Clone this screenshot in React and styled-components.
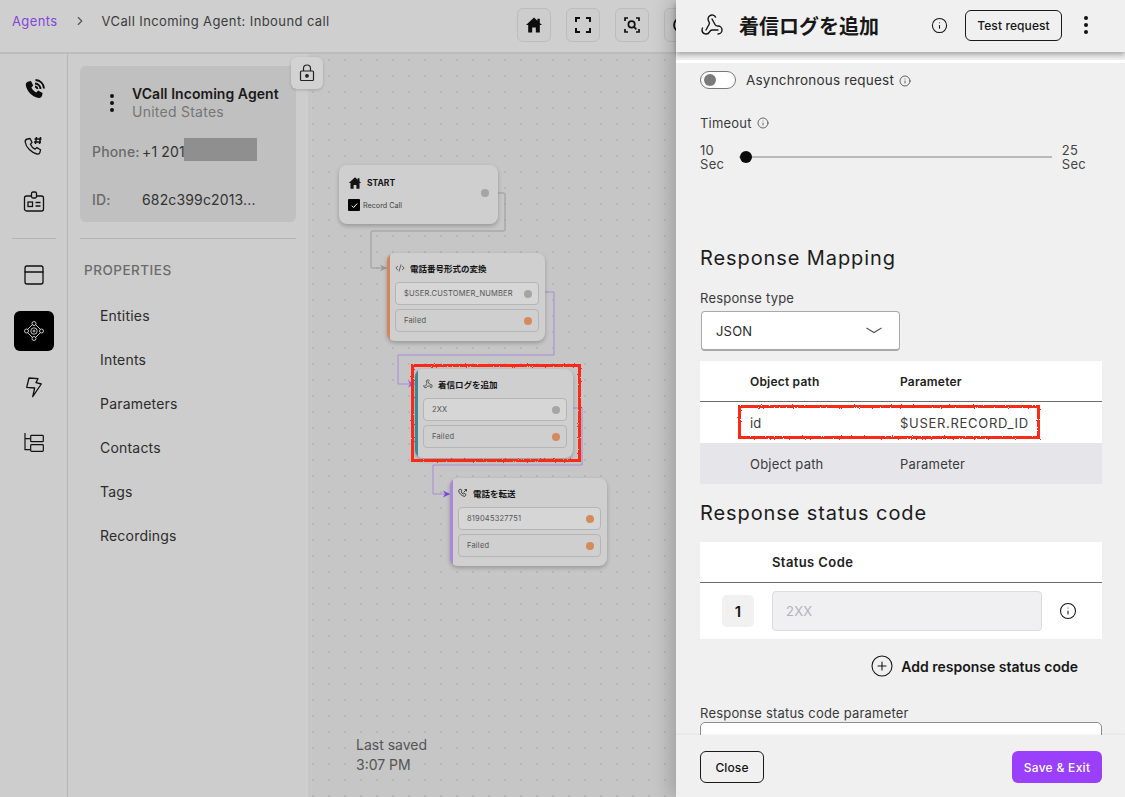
import React from 'react';
import styled, { createGlobalStyle } from 'styled-components';
import { ChevronRight, CirclePlus, Info, PanelTop, Webhook } from 'lucide-react';

const GlobalStyle = createGlobalStyle`
  html, body { margin: 0; padding: 0; background: #c6c6c6; }
  body { font-family: Inter, "Noto Sans CJK JP", sans-serif; color: #141414; }
  * { box-sizing: border-box; }
`;

const Page = styled.div`
  display: flex;
  width: 1125px;
  height: 797px;
  overflow: hidden;
`;

const Main = styled.div`
  flex: 0 0 676px;
  width: 676px;
  display: flex;
  flex-direction: column;
  overflow: hidden;
`;

const TopBar = styled.header`
  flex: 0 0 54px;
  display: flex;
  align-items: flex-start;
  padding: 8px 0 0 12px;
  background: #cfcfcf;
  border-bottom: 2px solid #bcbcbc;
`;

const Crumbs = styled.div`
  flex: 0 0 505px;
  display: flex;
  align-items: center;
  height: 26px;
  font-size: 13px;
  letter-spacing: 0.4px;
  color: #3c3c3c;
  a { color: #8446d6; margin-right: 15px; }
  svg { color: #555; margin-right: 15px; }
`;

const Tools = styled.div`
  display: flex;
  flex: none;
  gap: 15px;
`;

const ToolButton = styled.button`
  flex: none;
  width: 34px;
  height: 34px;
  padding: 0;
  display: flex;
  align-items: center;
  justify-content: center;
  background: #cdcdcd;
  border: 1px solid #bdbdbd;
  border-radius: 6px;
  color: #0d0d0d;
`;

const Workspace = styled.div`
  flex: 1;
  display: flex;
  min-height: 0;
`;

const Rail = styled.nav`
  flex: 0 0 68px;
  display: flex;
  flex-direction: column;
  align-items: center;
  padding-top: 16px;
  background: #cdcdcd;
  border-right: 1px solid #b9b9b9;
`;

const RailItem = styled.div`
  flex: none;
  width: 40px;
  height: 40px;
  margin-bottom: 16px;
  display: flex;
  align-items: center;
  justify-content: center;
  border-radius: 6px;
  color: ${p => (p.$active ? '#d6d6d6' : '#0f0f0f')};
  background: ${p => (p.$active ? '#000' : 'transparent')};
`;

const RailDivider = styled.hr`
  width: 44px;
  margin: 0 0 16px;
  border: 0;
  border-top: 1px solid #b4b4b4;
`;

const Panel = styled.aside`
  flex: 0 0 240px;
  padding: 12px 12px 0;
  background: #cdcdcd;
`;

const AgentCard = styled.div`
  height: 156px;
  padding: 19px 12px 0;
  border-radius: 6px;
  background: #c0c0c0;
`;

const AgentHead = styled.div`
  display: flex;
  align-items: center;
  gap: 17px;
  padding-left: 17px;
  height: 36px;
  margin-bottom: 18px;
  svg { flex: none; }
`;

const AgentName = styled.div`
  font-size: 14px;
  font-weight: 600;
  line-height: 18px;
  letter-spacing: 0.05px;
  color: #1a1a1a;
  white-space: nowrap;
  small {
    display: block;
    font-size: 14px;
    font-weight: 400;
    letter-spacing: 0.25px;
    color: #767676;
  }
`;

const InfoRow = styled.div`
  display: flex;
  align-items: center;
  height: 24px;
  margin-bottom: 24px;
  font-size: 14px;
  letter-spacing: 0.15px;
  color: #333;
  b { font-weight: 500; color: #6a6a6a; width: ${p => p.$label}px; flex: none; }
`;

const Redacted = styled.span`
  width: 73px;
  height: 23px;
  margin-top: -3px;
  margin-left: -1px;
  background: #8f8f8f;
`;

const PanelDivider = styled.hr`
  margin: 16px 0 23px;
  border: 0;
  border-top: 1px solid #b4b4b4;
`;

const PanelTitle = styled.div`
  padding-left: 4px;
  margin-bottom: 29px;
  font-size: 13.5px;
  font-weight: 500;
  line-height: 16px;
  letter-spacing: 0.5px;
  color: #6b6b6b;
`;

const PanelLink = styled.div`
  padding-left: 20px;
  height: 44px;
  font-size: 14px;
  line-height: 18px;
  letter-spacing: 0.2px;
  color: #2c2c2c;
`;

const Canvas = styled.main`
  position: relative;
  flex: 1;
  background-color: #c6c6c6;
  background-image: radial-gradient(circle, #b7b7b7 0.8px, transparent 1px);
  background-size: 16px 16px;
  background-position: -3px -2px;
`;

/* canvas coordinates are page x - 308, page y - 54 */
const Edges = styled.svg`
  position: absolute;
  left: 0;
  top: 0;
  width: 368px;
  height: 743px;
  fill: none;
`;

const LockButton = styled.button`
  position: absolute;
  left: -17px;
  top: 3px;
  width: 32px;
  height: 32px;
  padding: 0;
  display: flex;
  align-items: center;
  justify-content: center;
  border: 0;
  border-radius: 6px;
  color: #222;
  background: #d2d2d2;
  box-shadow: 0 1px 3px rgba(0, 0, 0, 0.18);
`;

const Node = styled.div`
  position: absolute;
  left: ${p => p.$x}px;
  top: ${p => p.$y}px;
  width: ${p => p.$w}px;
  height: ${p => p.$h}px;
  padding: ${p => (p.$accent ? '0 6px 0 8px' : '3px 9px 0')};
  border-radius: 8px;
  background-color: #cfcfcf;
  background-image: ${p => (p.$accent ? `linear-gradient(${p.$accent}, ${p.$accent})` : 'none')};
  background-size: 3px 100%;
  background-repeat: no-repeat;
  box-shadow: 0 2px 4px rgba(0, 0, 0, 0.24);
`;

const NodeTitle = styled.div`
  display: flex;
  align-items: center;
  gap: 5px;
  height: 29px;
  font-size: 8.5px;
  font-weight: 700;
  color: #141414;
  white-space: nowrap;
  svg { flex: none; }
`;

const NodeStart = styled.div`
  display: flex;
  align-items: center;
  gap: 3px;
  height: 12px;
  margin-top: 2px;
  font-size: 7.2px;
  color: #444;
  i {
    width: 12px;
    height: 12px;
    display: flex;
    align-items: center;
    justify-content: center;
    border-radius: 1px;
    background: #050505;
  }
`;

const Port = styled.span`
  flex: none;
  width: 8px;
  height: 8px;
  border-radius: 50%;
  background: ${p => p.$color};
`;

const StartPort = styled(Port)`
  position: absolute;
  right: 9px;
  top: 24px;
`;

const NodeRow = styled.div`
  display: flex;
  align-items: center;
  justify-content: space-between;
  height: 23px;
  margin-bottom: 4px;
  padding: 0 6px 0 8px;
  border: 1px solid #b5b5b5;
  border-radius: 4px;
  font-size: 7.5px;
  letter-spacing: 0.2px;
  color: #555;
  background: ${p => (p.$light ? '#d6d6d6' : 'transparent')};
`;

const Saved = styled.div`
  position: absolute;
  left: 48px;
  top: 681px;
  font-size: 14px;
  line-height: 20px;
  color: #555;
`;

const Marker = styled.div`
  position: absolute;
  left: ${p => p.$x}px;
  top: ${p => p.$y}px;
  width: ${p => p.$w}px;
  height: ${p => p.$h}px;
  border: 3px solid #fb2c14;
  filter: url(#rough);
  pointer-events: none;
`;

const FilterDefs = styled.svg`
  position: absolute;
  width: 0;
  height: 0;
`;

const Drawer = styled.section`
  position: relative;
  flex: 0 0 449px;
  display: flex;
  flex-direction: column;
  background: #f0f0f1;
  box-shadow: -8px 0 16px rgba(0, 0, 0, 0.16);
`;

const DrawerHead = styled.div`
  flex: 0 0 52px;
  display: flex;
  align-items: center;
  padding: 0 36px 2px 24px;
  background: #f0f0f1;
  box-shadow: 0 3px 5px rgba(0, 0, 0, 0.3);
  z-index: 1;
  h1 {
    margin: 0 0 0 15px;
    font-size: 20px;
    font-weight: 700;
    color: #171717;
  }
`;

const OutlineButton = styled.button`
  display: inline-flex;
  align-items: center;
  justify-content: center;
  width: ${p => p.$w}px;
  height: ${p => p.$h}px;
  padding: 0;
  border: 1px solid #1a1a1a;
  border-radius: 6px;
  background: transparent;
  font: 500 12px Inter, sans-serif;
  letter-spacing: 0.1px;
  color: #141414;
`;

const HeadActions = styled.div`
  margin-left: auto;
  display: flex;
  align-items: center;
  gap: 17px;
  button { margin-right: 4px; }
`;

const DrawerBody = styled.div`
  position: relative;
  flex: 1;
  min-height: 0;
  overflow: hidden;
  padding: 0 23px 0 24px;
`;

const WhiteStrip = styled.div`
  height: 3px;
  margin: 8px -23px 8px -24px;
  background: #fff;
`;

const ToggleRow = styled.div`
  display: flex;
  align-items: center;
  height: 18px;
  font-size: 13.5px;
  letter-spacing: 0.2px;
  color: #333;
  svg { margin-left: 5px; margin-top: 2px; }
`;

const Toggle = styled.span`
  flex: none;
  width: 36px;
  height: 18px;
  margin-right: 10px;
  padding: 2px 3px;
  border: 1px solid #777;
  border-radius: 9px;
  background: #fff;
  i {
    display: block;
    width: 12px;
    height: 12px;
    border-radius: 50%;
    background: #7a7a7a;
  }
`;

const FieldLabel = styled.div`
  display: flex;
  align-items: center;
  gap: 5px;
  margin-top: ${p => p.$top || 0}px;
  font-size: 13px;
  line-height: 16px;
  letter-spacing: 0.2px;
  color: #3a3a3a;
`;

const SliderRow = styled.div`
  display: flex;
  align-items: center;
  gap: 10px;
  margin-top: 12px;
  padding-right: 16px;
  font-size: 13px;
  line-height: 14px;
  letter-spacing: 0.3px;
  color: #444;
`;

const SliderTrack = styled.div`
  position: relative;
  flex: 1;
  height: 2px;
  margin: 0 0 0 5px;
  background: #b9b9b9;
  i {
    position: absolute;
    left: 1px;
    top: -5px;
    width: 12px;
    height: 12px;
    border-radius: 50%;
    background: #0a0a0a;
  }
`;

const SectionTitle = styled.h2`
  margin: ${p => p.$top}px 0 ${p => p.$bottom}px;
  font-size: 20px;
  font-weight: 400;
  line-height: 24px;
  letter-spacing: 0.9px;
  color: #1c1c1c;
`;

const SelectBox = styled.div`
  display: flex;
  align-items: center;
  justify-content: space-between;
  width: 199px;
  height: 40px;
  margin: 5px 0 10px 1px;
  padding: 0 17px 0 14px;
  border: 1px solid #a9a9a9;
  border-bottom-width: 2px;
  border-radius: 4px;
  background: #fff;
  font-size: 13px;
  letter-spacing: 0.2px;
  color: #2b2b2b;
`;

const Table = styled.div`
  background: #fff;
  font-size: 13px;
  letter-spacing: 0.2px;
`;

const MapRow = styled.div`
  display: grid;
  grid-template-columns: 150px 1fr;
  align-items: center;
  height: 41px;
  padding-left: 50px;
  font-weight: ${p => (p.$head ? 600 : 400)};
  font-size: ${p => (p.$head ? '12px' : '13px')};
  color: ${p => (p.$head ? '#222' : '#3b3b3b')};
  background: ${p => (p.$muted ? '#e6e6ea' : '#fff')};
  border-bottom: ${p => (p.$head ? '1px solid #6b6b6b' : '0')};
`;

const ParamValue = styled.span`
  letter-spacing: 0.7px;
`;

const StatusHead = styled.div`
  height: 41px;
  padding-left: 72px;
  display: flex;
  align-items: center;
  font-size: 13px;
  font-weight: 600;
  letter-spacing: 0.4px;
  color: #222;
  border-bottom: 1px solid #6b6b6b;
`;

const StatusRow = styled.div`
  display: flex;
  align-items: center;
  height: 56px;
  padding: 0 0 0 22px;
`;

const IndexBox = styled.div`
  flex: none;
  width: 32px;
  height: 32px;
  margin-right: 18px;
  display: flex;
  align-items: center;
  justify-content: center;
  border-radius: 5px;
  background: #f1f1f2;
  font-size: 15px;
  font-weight: 600;
  color: #171717;
`;

const DisabledInput = styled.div`
  flex: none;
  width: 270px;
  height: 40px;
  margin-right: 17px;
  padding-left: 13px;
  display: flex;
  align-items: center;
  border: 1px solid #dcdcdf;
  border-radius: 4px;
  background: #f0f0f2;
  font-size: 13px;
  color: #b3b3b6;
`;

const AddRow = styled.div`
  display: flex;
  align-items: center;
  justify-content: flex-end;
  gap: 7px;
  height: 24px;
  margin: 15px 24px 27px 0;
  font-size: 14px;
  font-weight: 600;
  color: #171717;
`;

const TextInput = styled.div`
  height: 40px;
  margin-top: 1px;
  border: 1px solid #8d8d8d;
  border-radius: 5px;
  background: #fff;
`;

const DrawerFoot = styled.div`
  flex: 0 0 62px;
  display: flex;
  align-items: flex-start;
  justify-content: space-between;
  padding: 16px 23px 0 24px;
  background: #f0f0f1;
  box-shadow: 0 -1px 2px rgba(0, 0, 0, 0.05);
  z-index: 1;
`;

const SaveButton = styled.button`
  width: 90px;
  height: 32px;
  padding: 0;
  border: 0;
  border-radius: 6px;
  background: #9a3ffb;
  font: 500 12px Inter, sans-serif;
  letter-spacing: 0.3px;
  color: #fff;
`;

const Dots = ({ size = 4, gap = 7, color = '#111' }) => (
  <svg width={size + 2} height={gap * 2 + size + 2} viewBox={`0 0 ${size + 2} ${gap * 2 + size + 2}`}>
    {[0, 1, 2].map(i => (
      <circle key={i} cx={(size + 2) / 2} cy={(size + 2) / 2 + i * gap} r={size / 2} fill={color} />
    ))}
  </svg>
);

const HomeIcon = ({ size = 18 }) => (
  <svg width={size} height={size} viewBox="0 0 18 18" fill="currentColor">
    <path d="M9 1.500 1 9h2.200v7.500h4v-5h3.600v5h4V9H17l-2.200-2V2.800h-2.400v2z" />
  </svg>
);

const ScanIcon = () => (
  <svg width="18" height="18" viewBox="0 0 18 18" fill="none" stroke="currentColor" strokeWidth="2">
    <path d="M2 6V2h4M12 2h4v4M16 12v4h-4M6 16H2v-4" />
  </svg>
);

const ScanSearchIcon = () => (
  <svg width="18" height="18" viewBox="0 0 18 18" fill="none" stroke="currentColor" strokeWidth="1.700">
    <path d="M2 5V2h3M13 2h3v3M16 13v3h-3M5 16H2v-3" />
    <circle cx="8.600" cy="8.400" r="3.200" />
    <path d="m11 11 2.400 2.400" />
  </svg>
);

const RingIcon = () => (
  <svg width="18" height="18" viewBox="0 0 18 18" fill="none" stroke="currentColor" strokeWidth="1.700">
    <circle cx="9" cy="9" r="7" />
  </svg>
);

const LockIcon = () => (
  <svg width="16" height="18" viewBox="0 0 16 18" fill="none" stroke="currentColor" strokeWidth="1.200">
    <rect x="1.500" y="7" width="13" height="9.500" rx="1" />
    <path d="M4.500 7V4.500a3.500 3.500 0 0 1 7 0V7" />
    <circle cx="8" cy="11.800" r="1.300" fill="currentColor" />
  </svg>
);

const PhoneWaves = () => (
  <svg width="24" height="24" viewBox="0 0 24 24" fill="none">
    <path
      d="M6.500 3.500 9 3l2.200 4.600-1.800 1.800c.8 2 2.600 3.900 4.900 5l1.900-1.900 4.400 2.500-.5 2.600c-.4 1.600-1.900 2.600-3.600 2.300C9.600 18.600 4.600 13 3.800 7c-.2-1.600 1-3 2.700-3.500z"
      fill="#0c0c0c"
    />
    <path d="M13 5.500c3 .2 5.300 2.500 5.500 5.500M13.500 2c4.800.3 8.200 3.700 8.500 8.500M13 8.500c1.400.2 2.300 1.100 2.500 2.500" stroke="#0c0c0c" strokeWidth="1.900" />
  </svg>
);

const PhoneHash = () => (
  <svg width="22" height="24" viewBox="0 0 22 24" fill="none" stroke="#111" strokeWidth="1.300">
    <path d="M4.500 5 7 4.500l2 4-1.600 1.800c.9 2.100 2.500 3.800 4.600 4.900l1.800-1.600 3.700 2.200-.5 2.400c-.4 1.400-1.600 2.100-3.100 1.800C8.500 18.600 3 13.500 2.200 8c-.2-1.400.8-2.600 2.300-3z" />
    <path d="M13.500 3 12.500 10M17.500 3l-1 7M11.500 5h7M11 8h7" strokeWidth="1.500" />
  </svg>
);

const BadgeIcon = () => (
  <svg width="22" height="22" viewBox="0 0 22 22" fill="none" stroke="#111" strokeWidth="1.300">
    <rect x="1.500" y="5" width="19" height="15" rx="2" />
    <rect x="8.500" y="1" width="5" height="6" rx="1.500" fill="#cdcdcd" />
    <rect x="5" y="11" width="4.500" height="4.500" />
    <path d="M12.500 11.500h5M12.500 15h5" />
  </svg>
);

const FlowIcon = () => (
  <svg width="24" height="24" viewBox="0 0 24 24" fill="none" stroke="currentColor" strokeWidth="0.900">
    <path d="m5.500 10.500 5-5M13.500 5.500l5 5M18.500 13.500l-5 5M10.500 18.500l-5-5" />
    <circle cx="12" cy="12" r="3.200" />
    <circle cx="12" cy="12" r="1" />
    <circle cx="12" cy="4.500" r="2" />
    <circle cx="12" cy="19.500" r="2" />
    <circle cx="4.500" cy="12" r="2" />
    <circle cx="19.500" cy="12" r="2" />
  </svg>
);

const BoltIcon = () => (
  <svg width="22" height="22" viewBox="0 0 22 22" fill="none" stroke="#111" strokeWidth="1.300" strokeLinejoin="round">
    <path d="M6 2 15 2.600 13 6.600 18.300 8 9.700 20.600 11.700 12 3.700 11.300z" />
  </svg>
);

const TreeIcon = () => (
  <svg width="22" height="22" viewBox="0 0 22 22" fill="none" stroke="#111" strokeWidth="1.200">
    <path d="M2 1v16.700h5M2 6.700h5" />
    <rect x="7.700" y="3.400" width="12.600" height="6.300" rx="0.800" />
    <rect x="7.700" y="12.700" width="12.600" height="6.600" rx="0.800" />
  </svg>
);

const CodeIcon = () => (
  <svg width="10" height="10" viewBox="0 0 10 10" fill="none" stroke="#333" strokeWidth="0.700">
    <path d="M3 3 .8 5 3 7M7 3l2.200 2L7 7M6 1.500 4 8.500" />
  </svg>
);

const TransferIcon = () => (
  <svg width="10" height="10" viewBox="0 0 10 10" fill="none" stroke="#222" strokeWidth="0.800">
    <path d="M1.500 1.500 3 1.200l1 1.800-.8.800c.4 1 1.100 1.800 2.100 2.300l.9-.8 1.700 1-.3 1.200c-.2.700-.8 1-1.500.8C3.500 7.700 1.100 5.300.7 3c-.1-.7.200-1.300.8-1.500z" />
    <path d="m5.500 4.500 3-3M6.500 1.500h2v2" />
  </svg>
);

const CheckMark = () => (
  <svg width="9" height="9" viewBox="0 0 10 10" fill="none" stroke="#fff" strokeWidth="1.100">
    <path d="m2 5.200 2 2 4-4.400" />
  </svg>
);

const WideChevron = () => (
  <svg width="16" height="7" viewBox="0 0 16 7" fill="none" stroke="#555" strokeWidth="1.100">
    <path d="m.5 1 7.500 4.500L15.500 1" />
  </svg>
);

const Arrow = ({ x, y, color }) => <path d={`M${x - 7} ${y - 3.5}l7 3.500-7 3.500 2-3.500z`} fill={color} />;

const GREY_PORT = '#a5a5a5';
const ORANGE_PORT = '#d58a5c';

const LINKS = ['Entities', 'Intents', 'Parameters', 'Contacts', 'Tags', 'Recordings'];

export default function App() {
  return (
    <>
      <GlobalStyle />
      <FilterDefs>
        <filter id="rough" x="-5%" y="-10%" width="110%" height="120%">
          <feTurbulence type="fractalNoise" baseFrequency="0.9" numOctaves="2" seed="3" />
          <feDisplacementMap in="SourceGraphic" scale="2.5" />
        </filter>
      </FilterDefs>
      <Page>
        <Main>
          <TopBar>
            <Crumbs>
              <a>Agents</a>
              <ChevronRight size={14} />
              <span>VCall Incoming Agent: Inbound call</span>
            </Crumbs>
            <Tools>
              <ToolButton><HomeIcon /></ToolButton>
              <ToolButton><ScanIcon /></ToolButton>
              <ToolButton><ScanSearchIcon /></ToolButton>
              <ToolButton><RingIcon /></ToolButton>
            </Tools>
          </TopBar>
          <Workspace>
            <Rail>
              <RailItem><PhoneWaves /></RailItem>
              <RailItem><PhoneHash /></RailItem>
              <RailItem><BadgeIcon /></RailItem>
              <RailDivider />
              <RailItem><PanelTop size={24} strokeWidth={1.3} /></RailItem>
              <RailItem $active><FlowIcon /></RailItem>
              <RailItem><BoltIcon /></RailItem>
              <RailItem><TreeIcon /></RailItem>
            </Rail>
            <Panel>
              <AgentCard>
                <AgentHead>
                  <Dots size={4} gap={7} />
                  <AgentName>
                    VCall Incoming Agent
                    <small>United States</small>
                  </AgentName>
                </AgentHead>
                <InfoRow $label={50}>
                  <b>Phone:</b>
                  <span>+1 201</span>
                  <Redacted />
                </InfoRow>
                <InfoRow $label={50}>
                  <b>ID:</b>
                  <span>682c399c2013...</span>
                </InfoRow>
              </AgentCard>
              <PanelDivider />
              <PanelTitle>PROPERTIES</PanelTitle>
              {LINKS.map(link => <PanelLink key={link}>{link}</PanelLink>)}
            </Panel>
            <Canvas>
              <Edges viewBox="0 0 368 743">
                <path d="M190 139h6q1 0 1 1v36q0 1-1 1H64q-1 0-1 1v35q0 1 1 1h15" stroke="#9a9a9a" />
                <Arrow x={79} y={214} color="#9a9a9a" />
                <path d="M231 238h15v63H90v29h17" stroke="#a78ad6" />
                <Arrow x={107} y={330} color="#8a5fd8" />
                <path d="M259 354h15v57H125v29h17" stroke="#a78ad6" />
                <Arrow x={142} y={440} color="#7d49d8" />
              </Edges>
              <Node $x={31} $y={111} $w={159} $h={59}>
                <NodeTitle><HomeIcon size={14} />START</NodeTitle>
                <NodeStart><i><CheckMark /></i>Record Call</NodeStart>
                <StartPort $color={GREY_PORT} />
              </Node>
              <Node $x={79} $y={199} $w={158} $h={88} $accent="#d5855a">
                <NodeTitle><CodeIcon />電話番号形式の変換</NodeTitle>
                <NodeRow $light>$USER.CUSTOMER_NUMBER<Port $color={GREY_PORT} /></NodeRow>
                <NodeRow>Failed<Port $color={ORANGE_PORT} /></NodeRow>
              </Node>
              <Node $x={107} $y={315} $w={158} $h={89} $accent="#3e8796">
                <NodeTitle><Webhook size={10} strokeWidth={1.5} />着信ログを追加</NodeTitle>
                <NodeRow $light>2XX<Port $color={GREY_PORT} /></NodeRow>
                <NodeRow>Failed<Port $color={ORANGE_PORT} /></NodeRow>
              </Node>
              <Node $x={142} $y={424} $w={157} $h={88} $accent="#a988d8">
                <NodeTitle><TransferIcon />電話を転送</NodeTitle>
                <NodeRow $light>819045327751<Port $color={ORANGE_PORT} /></NodeRow>
                <NodeRow>Failed<Port $color={ORANGE_PORT} /></NodeRow>
              </Node>
              <Marker $x={103} $y={310} $w={170} $h={98} />
              <LockButton><LockIcon /></LockButton>
              <Saved>Last saved<br />3:07 PM</Saved>
            </Canvas>
          </Workspace>
        </Main>
        <Drawer>
          <DrawerHead>
            <Webhook size={24} strokeWidth={1.4} />
            <h1>着信ログを追加</h1>
            <HeadActions>
              <Info size={17} strokeWidth={1.5} />
              <OutlineButton $w={97} $h={31}>Test request</OutlineButton>
              <Dots size={4} gap={7} />
            </HeadActions>
          </DrawerHead>
          <DrawerBody>
            <WhiteStrip />
            <ToggleRow>
              <Toggle><i /></Toggle>
              Asynchronous request
              <Info size={12} strokeWidth={1.5} />
            </ToggleRow>
            <FieldLabel $top={26}>Timeout <Info size={12} strokeWidth={1.5} /></FieldLabel>
            <SliderRow>
              <span>10<br />Sec</span>
              <SliderTrack><i /></SliderTrack>
              <span>25<br />Sec</span>
            </SliderRow>
            <SectionTitle $top={75} $bottom={20}>Response Mapping</SectionTitle>
            <FieldLabel>Response type</FieldLabel>
            <SelectBox>JSON<WideChevron /></SelectBox>
            <Table>
              <MapRow $head><span>Object path</span><span>Parameter</span></MapRow>
              <MapRow><span>id</span><ParamValue>$USER.RECORD_ID</ParamValue></MapRow>
              <MapRow $muted><span>Object path</span><span>Parameter</span></MapRow>
            </Table>
            <SectionTitle $top={17} $bottom={17}>Response status code</SectionTitle>
            <Table>
              <StatusHead>Status Code</StatusHead>
              <StatusRow>
                <IndexBox>1</IndexBox>
                <DisabledInput>2XX</DisabledInput>
                <Info size={18} strokeWidth={1.4} />
              </StatusRow>
            </Table>
            <AddRow><CirclePlus size={24} strokeWidth={1.1} />Add response status code</AddRow>
            <FieldLabel>Response status code parameter</FieldLabel>
            <TextInput />
            <Marker $x={62} $y={353} $w={302} $h={34} />
          </DrawerBody>
          <DrawerFoot>
            <OutlineButton $w={64} $h={32}>Close</OutlineButton>
            <SaveButton>Save &amp; Exit</SaveButton>
          </DrawerFoot>
        </Drawer>
      </Page>
    </>
  );
}
